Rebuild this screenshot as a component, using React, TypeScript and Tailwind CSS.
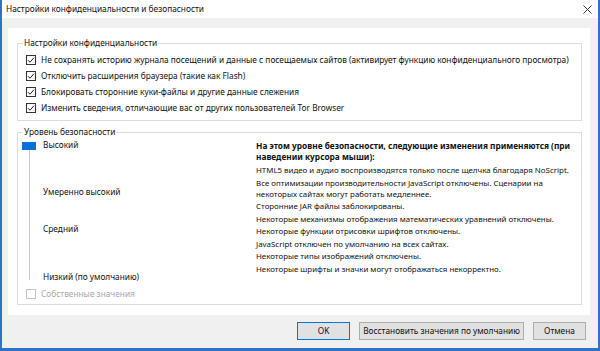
import React from "react";

const privacyOptions = [
  "Не сохранять историю журнала посещений и данные с посещаемых сайтов (активирует функцию конфиденциального просмотра)",
  "Отключить расширения браузера (такие как Flash)",
  "Блокировать сторонние куки-файлы и другие данные слежения",
  "Изменить сведения, отличающие вас от других пользователей Tor Browser",
];

const changes = [
  ["HTML5 видео и аудио воспроизводятся только после щелчка благодаря NoScript."],
  [
    "Все оптимизации производительности JavaScript отключены. Сценарии на",
    "некоторых сайтах могут работать медленнее.",
  ],
  ["Сторонние JAR файлы заблокированы."],
  ["Некоторые механизмы отображения математических уравнений отключены."],
  ["Некоторые функции отрисовки шрифтов отключены."],
  ["JavaScript отключен по умолчанию на всех сайтах."],
  ["Некоторые типы изображений отключены."],
  ["Некоторые шрифты и значки могут отображаться некорректно."],
];

function CheckBox({ checked, disabled }: { checked?: boolean; disabled?: boolean }) {
  return (
    <span
      className={
        "flex h-[10px] w-[10px] shrink-0 items-center justify-center border bg-white " +
        (disabled ? "border-[#c4c4c4]" : "border-[#333333]")
      }
    >
      {checked && (
        <svg width="8" height="8" viewBox="0 0 8 8">
          <path d="M1 4.2 L3 6.2 L7 1.6" fill="none" stroke="#222" strokeWidth="1" />
        </svg>
      )}
    </span>
  );
}

export default function App() {
  return (
    <div className="flex h-[351px] w-[600px] flex-col border-x-2 border-b-[3px] border-[#2f73c4] bg-[#f0f0f0] font-['Noto_Sans',sans-serif] text-[8.3px] text-[#111]">
      {/* title bar */}
      <div className="flex h-[18px] shrink-0 items-center justify-between bg-white pl-[4px] pr-[6px]">
        <span className="text-[8.3px] leading-[12px]">Настройки конфиденциальности и безопасности</span>
        <svg width="9" height="9" viewBox="0 0 9 9">
          <path d="M0.5 0.5 L8.5 8.5 M8.5 0.5 L0.5 8.5" stroke="#333" strokeWidth="1" />
        </svg>
      </div>

      {/* content panel */}
      <div className="ml-[6px] mr-[8px] mt-[10px] flex h-[287px] flex-col gap-[5px] bg-white pl-[9px] pr-[8px] pt-[9px]">
        <fieldset className="border border-[#dcdcdc] px-[0px] pb-[4px] pt-[3px]">
          <legend className="ml-[5px] px-[1px] leading-[12px]">Настройки конфиденциальности</legend>
          {privacyOptions.map((o) => (
            <div key={o} className="flex h-[16px] items-center gap-[5px] pl-[8px]">
              <CheckBox checked />
              <span className="whitespace-nowrap leading-[12px]">{o}</span>
            </div>
          ))}
        </fieldset>

        <fieldset className="flex h-[179px] border border-[#dcdcdc]">
          <legend className="ml-[5px] px-[1px] leading-[12px]">Уровень безопасности</legend>
          <div className="flex w-[238px] flex-col">
            <div className="relative flex flex-col pl-[25px]">
              <div className="absolute left-[11px] top-[12px] h-[130px] w-[1px] bg-[#c9c9c9]" />
              <div className="absolute left-[4px] top-[4px] h-[8px] w-[14px] bg-[#0a6fd6]" />
              <span className="mt-[1px] leading-[12px]">Высокий</span>
              <span className="mt-[35px] leading-[12px]">Умеренно высокий</span>
              <span className="mt-[25px] leading-[12px]">Средний</span>
              <span className="mt-[36px] leading-[12px]">Низкий (по умолчанию)</span>
            </div>
            <div className="mt-[4px] flex h-[14px] items-center gap-[5px] pl-[8px] text-[#a8a8a8]">
              <CheckBox disabled />
              <span className="leading-[12px]">Собственные значения</span>
            </div>
          </div>

          <div className="flex flex-col pt-[2px] text-[7.9px]">
            <p className="mb-[3px] whitespace-nowrap text-[8.3px] font-bold leading-[11px]">
              На этом уровне безопасности, следующие изменения применяются (при
              <br />
              наведении курсора мыши):
            </p>
            {changes.map((lines) => (
              <p key={lines[0]} className="mb-[1.5px] whitespace-nowrap leading-[11px]">
                {lines.map((l, i) => (
                  <span key={l}>
                    {i > 0 && <br />}
                    {l}
                  </span>
                ))}
              </p>
            ))}
          </div>
        </fieldset>
      </div>

      {/* buttons */}
      <div className="flex justify-end gap-[9px] pr-[12px] pt-[7px]">
        <button className="h-[18px] w-[53px] border border-[#0078d7] bg-[#e1e1e1] leading-[12px]">
          OK
        </button>
        <button className="h-[18px] w-[165px] whitespace-nowrap border border-[#adadad] bg-[#e1e1e1] leading-[12px]">
          Восстановить значения по умолчанию
        </button>
        <button className="h-[18px] w-[53px] border border-[#adadad] bg-[#e1e1e1] leading-[12px]">
          Отмена
        </button>
      </div>
    </div>
  );
}
